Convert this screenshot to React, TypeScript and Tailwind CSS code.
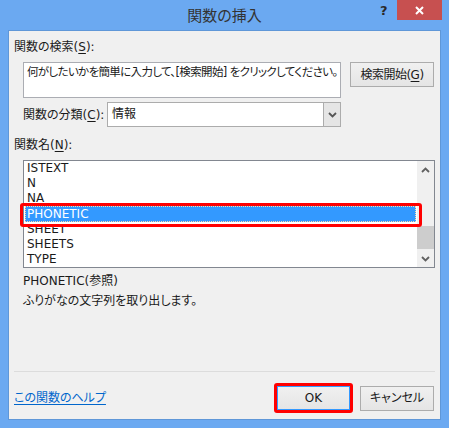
import React from "react";

function ChevronDown({ color = "#606060" }: { color?: string }) {
  return (
    <svg width="9" height="6" viewBox="0 0 9 6">
      <path d="M1 1L4.5 4.5L8 1" fill="none" stroke={color} strokeWidth="1.8" />
    </svg>
  );
}

function ChevronUp({ color = "#606060" }: { color?: string }) {
  return (
    <svg width="9" height="6" viewBox="0 0 9 6">
      <path d="M1 5L4.5 1.5L8 5" fill="none" stroke={color} strokeWidth="1.8" />
    </svg>
  );
}

export default function App() {
  const items = ["ISTEXT", "N", "NA", "PHONETIC", "SHEET", "SHEETS", "TYPE"];
  return (
    <div className="w-[449px] h-[428px] bg-[#6ba9f1] flex flex-col font-['DejaVu_Sans','Noto_Sans_CJK_JP',sans-serif] [font-feature-settings:'palt'] text-[12px] text-[#1a1a1a]">
      {/* title bar */}
      <div className="h-[30px] relative flex items-center justify-center shrink-0">
        <span className="text-[15px] text-[#333333] font-['Noto_Sans_CJK_JP',sans-serif]">関数の挿入</span>
        <span className="absolute left-[380px] top-[3px] text-[13px] leading-[16px] font-bold text-[#2a2a2a]">?</span>
        <div className="absolute left-[397px] top-0 w-[45px] h-[20px] bg-[#c75050] flex items-center justify-center">
          <svg width="9" height="9" viewBox="0 0 9 9">
            <path d="M1 1L8 8M8 1L1 8" stroke="white" strokeWidth="2" />
          </svg>
        </div>
      </div>

      {/* panel */}
      <div className="mx-[8px] h-[390px] bg-[#f0f0f0] border border-[#5f97d8] flex flex-col pl-[5px] pr-[5px] pt-[8px] pb-[6px]">
        <div className="h-[16px] leading-[16px]">
          関数の検索(<span className="underline underline-offset-2">S</span>):
        </div>

        <div className="mt-[7px] flex items-start">
          <div className="ml-[9px] w-[318px] h-[36px] bg-white border border-[#abadb3] px-[3px] pt-[1px] leading-[16px] whitespace-nowrap overflow-hidden text-[11.5px] tracking-[-0.65px]">
            何がしたいかを簡単に入力して、[検索開始] をクリックしてください。
          </div>
          <div className="ml-[9px] w-[84px] h-[25px] border border-[#acacac] bg-linear-to-b from-[#f0f0f0] to-[#e5e5e5] flex items-center justify-center tracking-[-0.5px]">
            検索開始(<span className="underline underline-offset-2">G</span>)
          </div>
        </div>

        <div className="mt-[4px] flex items-center">
          <div className="ml-[9px] w-[84px] whitespace-nowrap">
            関数の分類(<span className="underline underline-offset-2">C</span>):
          </div>
          <div className="w-[234px] h-[25px] bg-white border border-[#acacac] flex">
            <div className="flex-1 pl-[4px] leading-[23px]">情報</div>
            <div className="w-[17px] bg-[#e5e5e5] border-l border-[#acacac] flex items-center justify-center">
              <ChevronDown color="#555555" />
            </div>
          </div>
        </div>

        <div className="mt-[10px] h-[16px] leading-[16px]">
          関数名(<span className="underline underline-offset-2">N</span>):
        </div>

        <div className="mt-[7px] ml-[9px] w-[412px] h-[108px] relative border border-[#828790] bg-white flex">
          <div className="flex-1 flex flex-col">
            {items.map((it) =>
              it === "PHONETIC" ? (
                <div
                  key={it}
                  className="h-[16px] mx-[1px] border border-dotted border-[#ffd9a8] bg-[#3399ff] text-white pl-[1px] leading-[14px]"
                >
                  {it}
                </div>
              ) : (
                <div key={it} className="h-[15px] pl-[3px] leading-[15px]">
                  {it}
                </div>
              )
            )}
          </div>
          <div className="w-[17px] bg-[#f0f0f0] flex flex-col">
            <div className="h-[17px] flex items-center justify-center">
              <ChevronUp />
            </div>
            <div className="mt-[48px] h-[23px] bg-[#cdcdcd]" />
            <div className="mt-auto h-[17px] flex items-center justify-center">
              <ChevronDown />
            </div>
          </div>
          <div className="absolute left-[-4px] top-[42px] w-[402px] h-[24px] border-[3px] border-[#ff0000] rounded-[3px]" />
        </div>

        <div className="mt-[3px] ml-[9px] leading-[20px]">
          <div>PHONETIC(参照)</div>
          <div>ふりがなの文字列を取り出します。</div>
        </div>

        <div className="flex-1" />
        <div className="h-px bg-[#dcdcdc]" />

        <div className="mt-[11px] flex items-center">
          <span className="text-[#0066cc] underline underline-offset-2">この関数のヘルプ</span>
          <div className="ml-auto border-[3px] border-[#ff0000] rounded-[3px]">
            <div className="w-[73px] h-[24px] border border-[#3399ff] bg-linear-to-b from-[#f0f0f0] to-[#e5e5e5] flex items-center justify-center">
              OK
            </div>
          </div>
          <div className="ml-[7px] mr-[1px] w-[74px] h-[25px] border border-[#acacac] bg-linear-to-b from-[#f0f0f0] to-[#e5e5e5] flex items-center justify-center">
            キャンセル
          </div>
        </div>
      </div>
    </div>
  );
}
